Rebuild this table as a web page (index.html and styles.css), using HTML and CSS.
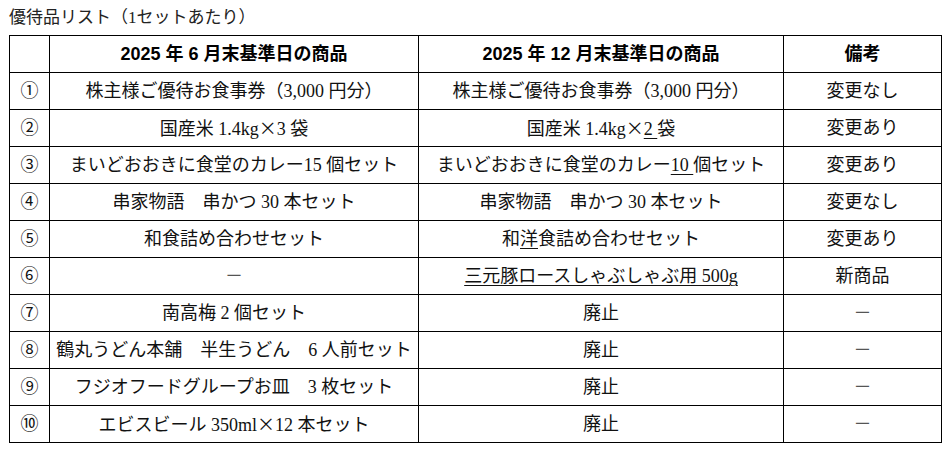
FILE: index.html
```html
<!DOCTYPE html>
<html lang="ja">
<head>
<meta charset="utf-8">
<title>優待品リスト</title>
<link rel="stylesheet" href="styles.css">
</head>
<body>
<div class="page">
  <div class="title">優待品リスト（1セットあたり）</div>
  <table class="list">
    <colgroup>
      <col class="c-no"><col class="c-old"><col class="c-new"><col class="c-note">
    </colgroup>
    <thead>
      <tr><th></th><th>2025 年 6 月末基準日の商品</th><th>2025 年 12 月末基準日の商品</th><th>備考</th></tr>
    </thead>
    <tbody>
      <tr><td>①</td><td>株主様ご優待お食事券（3,000 円分）</td><td>株主様ご優待お食事券（3,000 円分）</td><td>変更なし</td></tr>
      <tr><td>②</td><td>国産米 1.4kg<span class="x">×</span>3 袋</td><td>国産米 1.4kg<span class="x">×</span><span class="u">2 </span>袋</td><td>変更あり</td></tr>
      <tr><td>③</td><td>まいどおおきに食堂のカレー15 個セット</td><td>まいどおおきに食堂のカレー<span class="u">10 </span>個セット</td><td>変更あり</td></tr>
      <tr><td>④</td><td>串家物語　串かつ 30 本セット</td><td>串家物語　串かつ 30 本セット</td><td>変更なし</td></tr>
      <tr><td>⑤</td><td>和食詰め合わせセット</td><td>和<span class="u">洋</span>食詰め合わせセット</td><td>変更あり</td></tr>
      <tr><td>⑥</td><td class="dash">－</td><td><span class="u">三元豚ロースしゃぶしゃぶ用 500g</span></td><td>新商品</td></tr>
      <tr><td>⑦</td><td>南高梅 2 個セット</td><td>廃止</td><td class="dash">－</td></tr>
      <tr><td>⑧</td><td>鶴丸うどん本舗　半生うどん　6 人前セット</td><td>廃止</td><td class="dash">－</td></tr>
      <tr><td>⑨</td><td>フジオフードグループお皿　3 枚セット</td><td>廃止</td><td class="dash">－</td></tr>
      <tr><td>⑩</td><td>エビスビール 350ml<span class="x">×</span>12 本セット</td><td>廃止</td><td class="dash">－</td></tr>
    </tbody>
  </table>
</div>
</body>
</html>
```
FILE: styles.css
```css
html, body {
  margin: 0;
  padding: 0;
  background: #fff;
}
.page {
  padding: 6px 0 0 9px;
  font-family: "Liberation Serif", "Noto Sans CJK JP", serif;
  color: #111;
}
.title {
  font-size: 17px;
  line-height: 24px;
  height: 29px;
  color: #222;
}
.list {
  border-collapse: collapse;
  table-layout: fixed;
  width: 932px;
  font-size: 18px;
}
.c-no { width: 40px; }
.c-old { width: 369px; }
.c-new { width: 365px; }
.c-note { width: 158px; }
.list th, .list td {
  border: 1px solid #000;
  height: 36px;
  padding: 0;
  text-align: center;
  vertical-align: middle;
  white-space: nowrap;
  line-height: 20px;
}
.list th {
  font-family: "Liberation Sans", "Noto Sans CJK JP", sans-serif;
  font-weight: bold;
  color: #000;
}
.x {
  font-family: "Noto Sans CJK JP", sans-serif;
}
.u {
  text-decoration: underline;
  text-decoration-thickness: 1px;
  text-underline-offset: 3px;
}
.dash {
  color: #555;
}
```
